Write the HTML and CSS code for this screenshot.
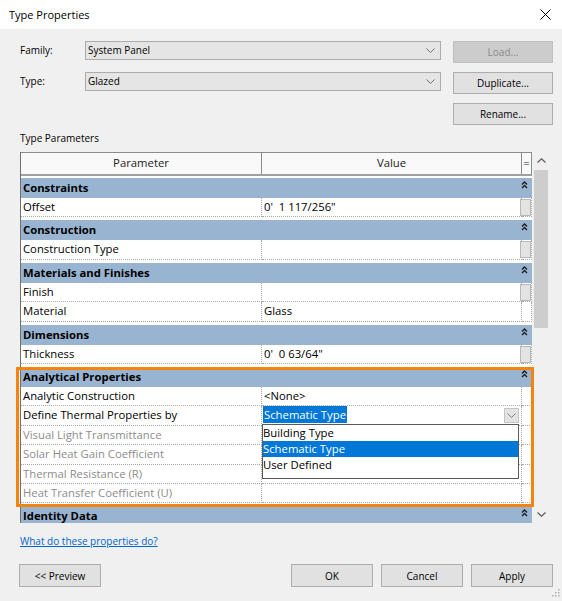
FILE: index.html
```html
<!DOCTYPE html>
<html lang="en">
<head>
    <meta charset="UTF-8">
    <title>Type Properties</title>
    <link rel="stylesheet" href="styles.css">
</head>
<body>
<div class="dialog">
    <div class="titlebar">
        <span class="title">Type Properties</span>
        <svg class="close" width="11" height="11" viewBox="0 0 11 11"><path d="M0.5 0.5 L10.5 10.5 M10.5 0.5 L0.5 10.5" stroke="#000" stroke-width="1" fill="none"/></svg>
    </div>

    <div class="content">
        <div class="type-form">
            <span class="label">Family:</span>
            <div class="combo">System Panel
                <svg width="9" height="5" viewBox="0 0 9 5"><path d="M0.5 0.5 L4.5 4.5 L8.5 0.5" stroke="#707070" fill="none"/></svg>
            </div>
            <button class="btn" disabled>Load...</button>

            <span class="label">Type:</span>
            <div class="combo">Glazed
                <svg width="9" height="5" viewBox="0 0 9 5"><path d="M0.5 0.5 L4.5 4.5 L8.5 0.5" stroke="#707070" fill="none"/></svg>
            </div>
            <button class="btn">Duplicate...</button>

            <span></span>
            <span></span>
            <button class="btn">Rename...</button>
        </div>

        <div class="section-label">Type Parameters</div>

        <div class="grid-box">
            <div class="grid">
                <div class="grid-head">
                    <div class="hcell">Parameter</div>
                    <div class="hcell">Value</div>
                    <div class="hcell">=</div>
                </div>

                <div class="band first">Constraints <svg class="collapse" width="7" height="8" viewBox="0 0 7 8"><path d="M1 3.5 L3.5 1 L6 3.5 M1 7 L3.5 4.5 L6 7" stroke="#1a1a1a" stroke-width="1.3" fill="none"/></svg></div>
                <div class="row"><div class="cell">Offset</div><div class="cell">0'  1 117/256"</div><div class="cell"><span class="eq-btn"></span></div></div>

                <div class="band">Construction <svg class="collapse" width="7" height="8" viewBox="0 0 7 8"><path d="M1 3.5 L3.5 1 L6 3.5 M1 7 L3.5 4.5 L6 7" stroke="#1a1a1a" stroke-width="1.3" fill="none"/></svg></div>
                <div class="row"><div class="cell">Construction Type</div><div class="cell"></div><div class="cell"><span class="eq-btn"></span></div></div>

                <div class="band">Materials and Finishes <svg class="collapse" width="7" height="8" viewBox="0 0 7 8"><path d="M1 3.5 L3.5 1 L6 3.5 M1 7 L3.5 4.5 L6 7" stroke="#1a1a1a" stroke-width="1.3" fill="none"/></svg></div>
                <div class="row"><div class="cell">Finish</div><div class="cell"></div><div class="cell"><span class="eq-btn"></span></div></div>
                <div class="row"><div class="cell">Material</div><div class="cell">Glass</div><div class="cell"></div></div>

                <div class="band">Dimensions <svg class="collapse" width="7" height="8" viewBox="0 0 7 8"><path d="M1 3.5 L3.5 1 L6 3.5 M1 7 L3.5 4.5 L6 7" stroke="#1a1a1a" stroke-width="1.3" fill="none"/></svg></div>
                <div class="row"><div class="cell">Thickness</div><div class="cell">0'  0 63/64"</div><div class="cell"><span class="eq-btn"></span></div></div>

                <div class="band">Analytical Properties <svg class="collapse" width="7" height="8" viewBox="0 0 7 8"><path d="M1 3.5 L3.5 1 L6 3.5 M1 7 L3.5 4.5 L6 7" stroke="#1a1a1a" stroke-width="1.3" fill="none"/></svg></div>
                <div class="row"><div class="cell">Analytic Construction</div><div class="cell">&lt;None&gt;</div><div class="cell"></div></div>
                <div class="row"><div class="cell">Define Thermal Properties by</div><div class="cell select-cell"><span class="picked">Schematic Type</span><span class="drop-btn"><svg width="9" height="5" viewBox="0 0 9 5"><path d="M0.5 0.5 L4.5 4.5 L8.5 0.5" stroke="#808080" fill="none"/></svg></span><div class="drop-list"><div class="opt">Building Type</div><div class="opt selected">Schematic Type</div><div class="opt">User Defined</div></div></div><div class="cell"></div></div>
                <div class="row muted"><div class="cell">Visual Light Transmittance</div><div class="cell"></div><div class="cell"></div></div>
                <div class="row muted"><div class="cell">Solar Heat Gain Coefficient</div><div class="cell"></div><div class="cell"></div></div>
                <div class="row muted"><div class="cell">Thermal Resistance (R)</div><div class="cell"></div><div class="cell"></div></div>
                <div class="row muted"><div class="cell">Heat Transfer Coefficient (U)</div><div class="cell"></div><div class="cell"></div></div>

                <div class="band">Identity Data <svg class="collapse" width="7" height="8" viewBox="0 0 7 8"><path d="M1 3.5 L3.5 1 L6 3.5 M1 7 L3.5 4.5 L6 7" stroke="#1a1a1a" stroke-width="1.3" fill="none"/></svg></div>
            </div>

            <div class="vscroll">
                <div class="arrow"><svg width="9" height="5" viewBox="0 0 9 5"><path d="M0.5 4.5 L4.5 0.8 L8.5 4.5" stroke="#606060" stroke-width="1.3" fill="none"/></svg></div>
                <div class="track"><div class="thumb"></div></div>
                <div class="arrow"><svg width="9" height="5" viewBox="0 0 9 5"><path d="M0.5 0.5 L4.5 4.2 L8.5 0.5" stroke="#606060" stroke-width="1.3" fill="none"/></svg></div>
            </div>

            <!-- annotation box drawn over the analytical group -->
            <div class="callout"></div>
        </div>

        <a class="help-link" href="#">What do these properties do?</a>

        <div class="footer">
            <button class="btn wide preview">&lt;&lt; Preview</button>
            <button class="btn wide">OK</button>
            <button class="btn wide">Cancel</button>
            <button class="btn wide">Apply</button>
        </div>
    </div>

    <svg class="grip" width="8" height="8" viewBox="0 0 8 8">
        <rect x="6" y="0" width="1.5" height="1.5" fill="#b0b0b0"/>
        <rect x="3" y="3" width="1.5" height="1.5" fill="#b0b0b0"/>
        <rect x="6" y="3" width="1.5" height="1.5" fill="#b0b0b0"/>
        <rect x="0" y="6" width="1.5" height="1.5" fill="#b0b0b0"/>
        <rect x="3" y="6" width="1.5" height="1.5" fill="#b0b0b0"/>
        <rect x="6" y="6" width="1.5" height="1.5" fill="#b0b0b0"/>
    </svg>
</div>
</body>
</html>
```

FILE: styles.css
```css
body {
    margin: 0;
    background: #f0f0f0;
    font-family: "Open Sans", "Noto Sans", sans-serif;
    color: #000;
}

.dialog {
    position: relative;
    width: 562px;
    height: 601px;
    background: #f0f0f0;
}

.titlebar {
    height: 29px;
    background: #fff;
    display: flex;
    align-items: center;
    justify-content: space-between;
    padding: 0 11px 0 9px;
}

.title {
    font-size: 11px;
}

.content {
    padding: 12px 9px 0 20px;
}

/* family / type selectors */
.type-form {
    display: grid;
    grid-template-columns: 53px 356px 100px;
    grid-template-rows: 22px 22px 22px;
    column-gap: 12px;
    row-gap: 9px;
}

.label {
    font-size: 10px;
    line-height: 19px;
}

.combo {
    height: 19px;
    box-sizing: border-box;
    border: 1px solid #acacac;
    background: #e5e5e5;
    font-size: 10px;
    line-height: 17px;
    padding: 0 3px 0 2px;
    display: flex;
    align-items: center;
    justify-content: space-between;
}

.combo svg {
    margin-right: 2px;
}

.btn {
    height: 22px;
    box-sizing: border-box;
    border: 1px solid #adadad;
    background: #e1e1e1;
    font-family: "Open Sans", sans-serif;
    font-size: 10px;
    line-height: 14px;
    color: #000;
    padding: 0;
}

.btn:disabled {
    background: #cccccc;
    border-color: #bfbfbf;
    color: #8a8a8a;
}

.section-label {
    font-size: 10px;
    line-height: 13px;
    margin-top: 7px;
}

/* parameter grid */
.grid-box {
    position: relative;
    display: flex;
    width: 530px;
    height: 371px;
    margin-top: 7px;
}

.grid {
    width: 512px;
    height: 371px;
    box-sizing: border-box;
    border-left: 1px solid #707070;
    background: #fff;
    overflow: hidden;
    font-size: 11.3px;
}

.grid-head {
    display: grid;
    grid-template-columns: 241px 260px 10px;
    height: 24px;
    box-sizing: border-box;
    border-top: 1px solid #8c8c8c;
    border-bottom: 2px solid #a0a0a0;
    background: #f9f9f9;
}

.hcell {
    border-right: 1px solid #8c8c8c;
    text-align: center;
    line-height: 20px;
    color: #222;
}

.band {
    height: 23px;
    box-sizing: border-box;
    border-top: 3px solid #fff;
    background: #99b4d1;
    background-clip: padding-box;
    display: flex;
    justify-content: space-between;
    align-items: flex-start;
    padding-left: 2px;
    font-weight: 700;
    line-height: 20px;
}

.band.first {
    height: 22px;
    border-top-width: 2px;
}

.collapse {
    margin: 3px 4px 0 0;
}

.row {
    display: grid;
    grid-template-columns: 241px 260px 10px;
    height: 19.4px;
}

.cell {
    position: relative;
    box-sizing: border-box;
    border-right: 1px dotted #a8a8a8;
    border-bottom: 1px dotted #a8a8a8;
    padding-left: 2px;
    line-height: 18px;
    white-space: pre;
}

.row .cell:last-child {
    padding-left: 0;
}

.muted .cell {
    color: #8d8d8d;
}

.eq-btn {
    display: block;
    width: 11px;
    height: 17px;
    margin: 1px 0 0 -2px;
    box-sizing: border-box;
    background: #e3e3e3;
    border: 1px solid #b8b8b8;
}

.select-cell {
    white-space: nowrap;
}

.picked {
    background: #0078d7;
    color: #fff;
    display: inline-block;
    vertical-align: top;
    line-height: 17px;
    margin-left: -1px;
    padding: 0 1px;
}

.drop-btn {
    position: absolute;
    top: 2px;
    right: 2px;
    width: 15px;
    height: 15px;
    box-sizing: border-box;
    background: #e3e3e3;
    border: 1px solid #c4c4c4;
    display: flex;
    align-items: center;
    justify-content: center;
}

.drop-list {
    position: absolute;
    top: 18px;
    left: 0;
    width: 257px;
    height: 55px;
    box-sizing: border-box;
    border: 1px solid #5a5a5a;
    background: #fff;
    z-index: 2;
}

.opt {
    line-height: 16px;
    padding-left: 0;
}

.opt.selected {
    background: #0078d7;
    color: #fff;
}

.vscroll {
    width: 18px;
    display: flex;
    flex-direction: column;
    background: #f0f0f0;
}

.arrow {
    height: 17px;
    display: flex;
    align-items: center;
    justify-content: center;
}

.track {
    flex: 1;
    padding: 1px 2px 0 2px;
}

.thumb {
    height: 158px;
    background: #cdcdcd;
}

.callout {
    position: absolute;
    left: -4px;
    top: 215px;
    width: 518px;
    height: 140px;
    box-sizing: border-box;
    border: 3px solid #f7830f;
    pointer-events: none;
}

.help-link {
    display: block;
    width: fit-content;
    margin-top: 11px;
    font-size: 10px;
    line-height: 14px;
    color: #0066cc;
}

.footer {
    display: flex;
    gap: 8px;
    margin-top: 16px;
}

.btn.wide {
    width: 82px;
    height: 23px;
}

.preview {
    margin-left: -1px;
    margin-right: auto;
}

.grip {
    position: absolute;
    right: 2px;
    bottom: 4px;
}
```
